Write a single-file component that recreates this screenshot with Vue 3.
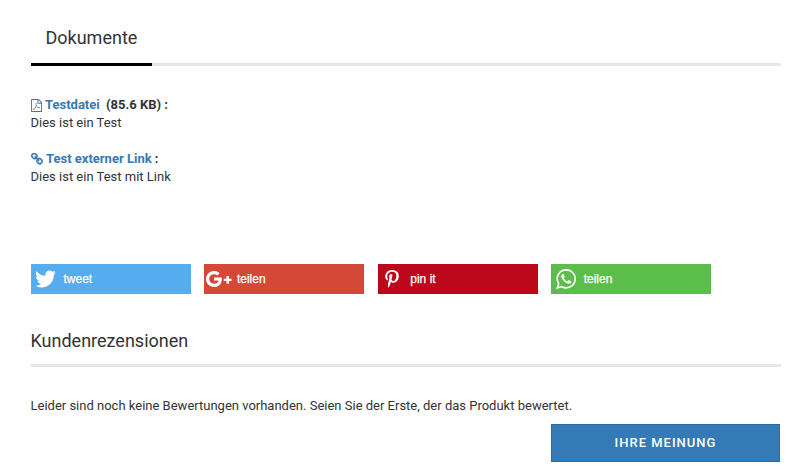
<script setup>
const shares = [
  {
    name: 'twitter',
    label: 'tweet',
    box: '108 256 1576 1280',
    d: 'M1684 408q-67 98-162 167 1 14 1 42 0 130-38 259.5t-115.5 248.5-184.5 210.5-258 146-323 54.5q-271 0-496-145 35 4 78 4 225 0 401-138-105-2-188-64.5t-114-159.5q33 5 61 5 43 0 85-11-112-23-185.5-111.5t-73.5-205.5v-4q68 38 146 41-66-44-105-115t-39-154q0-88 44-163 121 149 294.5 238.5t371.5 99.5q-8-38-8-74 0-134 94.5-228.5t228.5-94.5q140 0 236 102 109-21 205-78-37 115-142 178 93-10 186-50z',
  },
  {
    name: 'google',
    label: 'teilen',
    box: '0 0 26 16',
    d: 'M8 6.6v3h4.6c-.5 1.9-2.1 3.2-4.5 3.2A4.8 4.8 0 1 1 11.3 4.5l2.3-2.2A8 8 0 1 0 8 16c4.7 0 7.8-3.2 7.8-7.8 0-.6 0-1.1-.1-1.6zM20.5 5v2.7H17.8v2.4h2.7v2.7h2.4v-2.7h2.7V7.7h-2.7V5z',
  },
  {
    name: 'pinterest',
    label: 'pin it',
    box: '256 0 1280 1792',
    d: 'M256 597q0-108 37.5-203.5t103.5-166.5 152-123 185-78 202-26q158 0 294 66.5t221 193.5 85 287q0 96-19 188t-60 177-100 149.5-145 103-189 38.5q-68 0-135-32t-96-88q-10 39-28 112.5t-23.5 95-20.5 71-26 71-32 62.5-46 77.5-62 86.5l-14 5-9-10q-15-157-15-188 0-92 21.5-206.5t66.5-287.5 52-203q-32-65-32-169 0-83 52-156t132-73q61 0 95 40.5t34 102.5q0 66-44 191t-44 187q0 63 45 104.5t109 41.5q55 0 102-25t78.5-68 56-95 38-110.5 20-111 6.5-99.5q0-173-109.5-269.5t-285.5-96.5q-200 0-334 129.5t-134 328.5q0 44 12.5 85t27 65 27 45.5 12.5 30.5q0 28-15 73t-37 45q-2 0-17-3-51-15-90.5-56t-61-94.5-32.5-108-11-106.5z',
  },
  {
    name: 'whatsapp',
    label: 'teilen',
    box: '128 122 1536 1536',
    d: 'M1113 974q13 0 97.5 44t89.5 53q2 5 2 15 0 33-17 76-16 39-71 65.5t-102 26.5q-57 0-190-62-98-45-170-118t-148-185q-72-107-71-194v-8q3-91 74-158 24-22 52-22 6 0 18 1.5t19 1.5q19 0 26.5 6.5t15.5 27.5q8 20 33 88t25 75q0 21-34.5 57.5t-34.5 46.5q0 7 5 15 34 73 102 137 56 53 151 101 12 7 22 7 15 0 54-48.5t52-48.5zm-203 530q127 0 243.5-50t200.5-134 134-200.5 50-243.5-50-243.5-134-200.5-200.5-134-243.5-50-243.5 50-200.5 134-134 200.5-50 243.5q0 203 120 368l-79 233 242-77q158 104 345 104zm0-1382q153 0 292.5 60t240.5 161 161 240.5 60 292.5-60 292.5-161 240.5-240.5 161-292.5 60q-195 0-365-94l-417 134 136-405q-108-178-108-389 0-153 60-292.5t161-240.5 240.5-161 292.5-60z',
  },
]
</script>

<template>
  <main class="page">
    <nav class="tabs"><a class="tab">Dokumente</a></nav>

    <section class="docs">
      <div class="doc">
        <div class="doc-title">
          <svg class="icon-pdf" viewBox="128 0 1536 1792"><path d="M1596 380q28 28 48 76t20 88v1152q0 40-28 68t-68 28h-1344q-40 0-68-28t-28-68v-1600q0-40 28-68t68-28h896q40 0 88 20t76 48zm-444-244v376h376q-10-29-22-41l-313-313q-12-12-41-22zm384 1528v-1024h-416q-40 0-68-28t-28-68v-416h-768v1536h1280zm-514-593q33 26 84 56 59-7 117-7 147 0 177 49 16 22 2 52 0 1-1 2l-2 2v1q-6 38-71 38-48 0-115-20t-130-53q-221 24-392 83-153 262-242 262-15 0-28-7l-24-12q-1-1-6-5-10-10-6-36 9-40 56-91.5t132-96.5q14-9 23 6 2 2 2 4 52-85 107-197 68-136 104-262-24-82-30.5-159.5t6.5-127.5q11-40 42-40h22q23 0 35 15 18 21 9 68-2 6-4 8 1 3 1 8v30q-2 123-14 192 55 164 146 238zm-576 411q52-24 137-158-51 40-87.5 84t-49.5 74zm398-920q-15 42-2 132 1-7 7-44 0-3 7-43 1-4 4-8-1-1-1-2-1-2-1-3-1-22-13-36 0 1-1 2v2zm-124 661q135-54 284-81-2-1-13-9.5t-16-13.5q-76-67-127-176-27 86-83 197-30 56-45 83zm646-16q-24-24-140-24 76 28 124 28 14 0 18-1 0-1-2-3z" /></svg>
          <a>Testdatei</a><span class="size">(85.6 KB) :</span>
        </div>
        <div class="doc-text">Dies ist ein Test</div>
      </div>
      <div class="doc">
        <div class="doc-title">
          <svg class="icon-link" viewBox="80 80 1632 1632"><path d="M1520 1216q0-40-28-68l-208-208q-28-28-68-28-42 0-72 32 3 3 19 18.5t21.5 21.5 15 19 13 25.5 3.5 27.5q0 40-28 68t-68 28q-15 0-27.5-3.5t-25.5-13-19-15-21.5-21.5-18.5-19q-33 31-33 73 0 40 28 68l206 207q27 27 68 27 40 0 68-26l147-146q28-28 28-67zm-703-705q0-40-28-68l-206-207q-28-28-68-28-39 0-68 27l-147 146q-28 28-28 67 0 40 28 68l208 208q27 27 68 27 42 0 72-31-3-3-19-18.5t-21.5-21.5-15-19-13-25.5-3.5-27.5q0-40 28-68t68-28q15 0 27.5 3.5t25.5 13 19 15 21.5 21.5 18.5 19q33-31 33-73zm895 705q0 120-85 203l-147 146q-83 83-203 83-121 0-204-85l-206-207q-83-83-83-203 0-123 88-209l-88-88q-86 88-208 88-120 0-204-84l-208-208q-84-84-84-204t85-203l147-146q83-83 203-83 121 0 204 85l206 207q83 83 83 203 0 123-88 209l88 88q86-88 208-88 120 0 204 84l208 208q84 84 84 204z" /></svg>
          <a>Test externer Link</a><span class="colon">:</span>
        </div>
        <div class="doc-text">Dies ist ein Test mit Link</div>
      </div>
    </section>

    <ul class="shares">
      <li v-for="s in shares" :key="s.name" class="share" :class="s.name">
        <span class="share-icon"><svg :viewBox="s.box"><path :d="s.d" /></svg></span>
        <span class="share-label">{{ s.label }}</span>
      </li>
    </ul>

    <h2 class="heading">Kundenrezensionen</h2>
    <p class="notice">Leider sind noch keine Bewertungen vorhanden. Seien Sie der Erste, der das Produkt bewertet.</p>
    <button class="opinion">IHRE MEINUNG</button>
  </main>
</template>

<style>
body {
  margin: 0;
  background: #fff;
}
</style>

<style scoped>
.page {
  box-sizing: border-box;
  height: 476px;
  padding: 10px 9px 0 31px;
  display: flex;
  flex-direction: column;
  font: 13px/18px Roboto, sans-serif;
  color: #333;
}
.tabs {
  display: flex;
  height: 56px;
  box-shadow: inset 0 -3px #e7e7e7;
}
.tab {
  box-sizing: border-box;
  width: 121px;
  padding-left: 14.5px;
  border-bottom: 3px solid #000;
  font-size: 18px;
  line-height: 55px;
}
.docs {
  display: flex;
  flex-direction: column;
  gap: 18px;
  padding-top: 30px;
  height: 168px;
}
.doc-title {
  display: flex;
  align-items: center;
  height: 18px;
  font-weight: 700;
}
.doc-title a {
  color: #337ab7;
}
.doc-title svg {
  fill: #337ab7;
  flex: none;
}
.doc-text,
.heading,
.notice {
  text-indent: -0.5px;
}
.icon-pdf {
  width: 11px;
  height: 13px;
  margin-right: 3px;
}
.icon-link {
  width: 12px;
  height: 12px;
  margin-right: 3px;
  stroke: #337ab7;
  stroke-width: 50;
}
.size {
  margin-left: 6.3px;
}
.colon {
  margin-left: 3px;
}
.shares {
  display: flex;
  gap: 13.4px;
  margin: 0;
  padding: 0;
  list-style: none;
}
.share {
  display: flex;
  align-items: center;
  width: 160px;
  height: 30px;
  color: #fff;
  font: 12px/30px "Liberation Sans", Arial, sans-serif;
}
.share-icon {
  display: flex;
  align-items: center;
  width: 32.5px;
  height: 30px;
  box-sizing: border-box;
  padding-left: 4px;
}
.share-label {
  -webkit-text-stroke: 0.25px #fff;
}
.share svg {
  fill: #fff;
  flex: none;
}
.twitter { background: #55acee; }
.twitter svg { width: 21px; height: 18px; }
.google { background: #d34836; }
.google .share-icon { padding-left: 2px; padding-bottom: 1px; }
.google svg { width: 26px; height: 16px; }
.pinterest { background: #bd081c; }
.pinterest .share-icon { padding-left: 7.5px; }
.pinterest svg { width: 14px; height: 19px; }
.whatsapp { background: #5cbe4a; }
.whatsapp .share-icon { padding-left: 5px; }
.whatsapp svg { width: 20px; height: 20px; }
.heading {
  box-sizing: border-box;
  height: 40px;
  margin: 33px 0 0;
  border-bottom: 3px solid #e7e7e7;
  font-size: 18px;
  line-height: 27px;
  font-weight: 400;
}
.notice {
  margin: 30px 0 0;
}
.opinion {
  align-self: flex-end;
  width: 229px;
  height: 38px;
  margin: 9px 1px 0 0;
  padding: 0;
  border: 1px solid #2e6da4;
  background: #337ab7;
  color: #fff;
  font: 500 13px/36px Roboto, sans-serif;
  letter-spacing: 1px;
}
</style>
